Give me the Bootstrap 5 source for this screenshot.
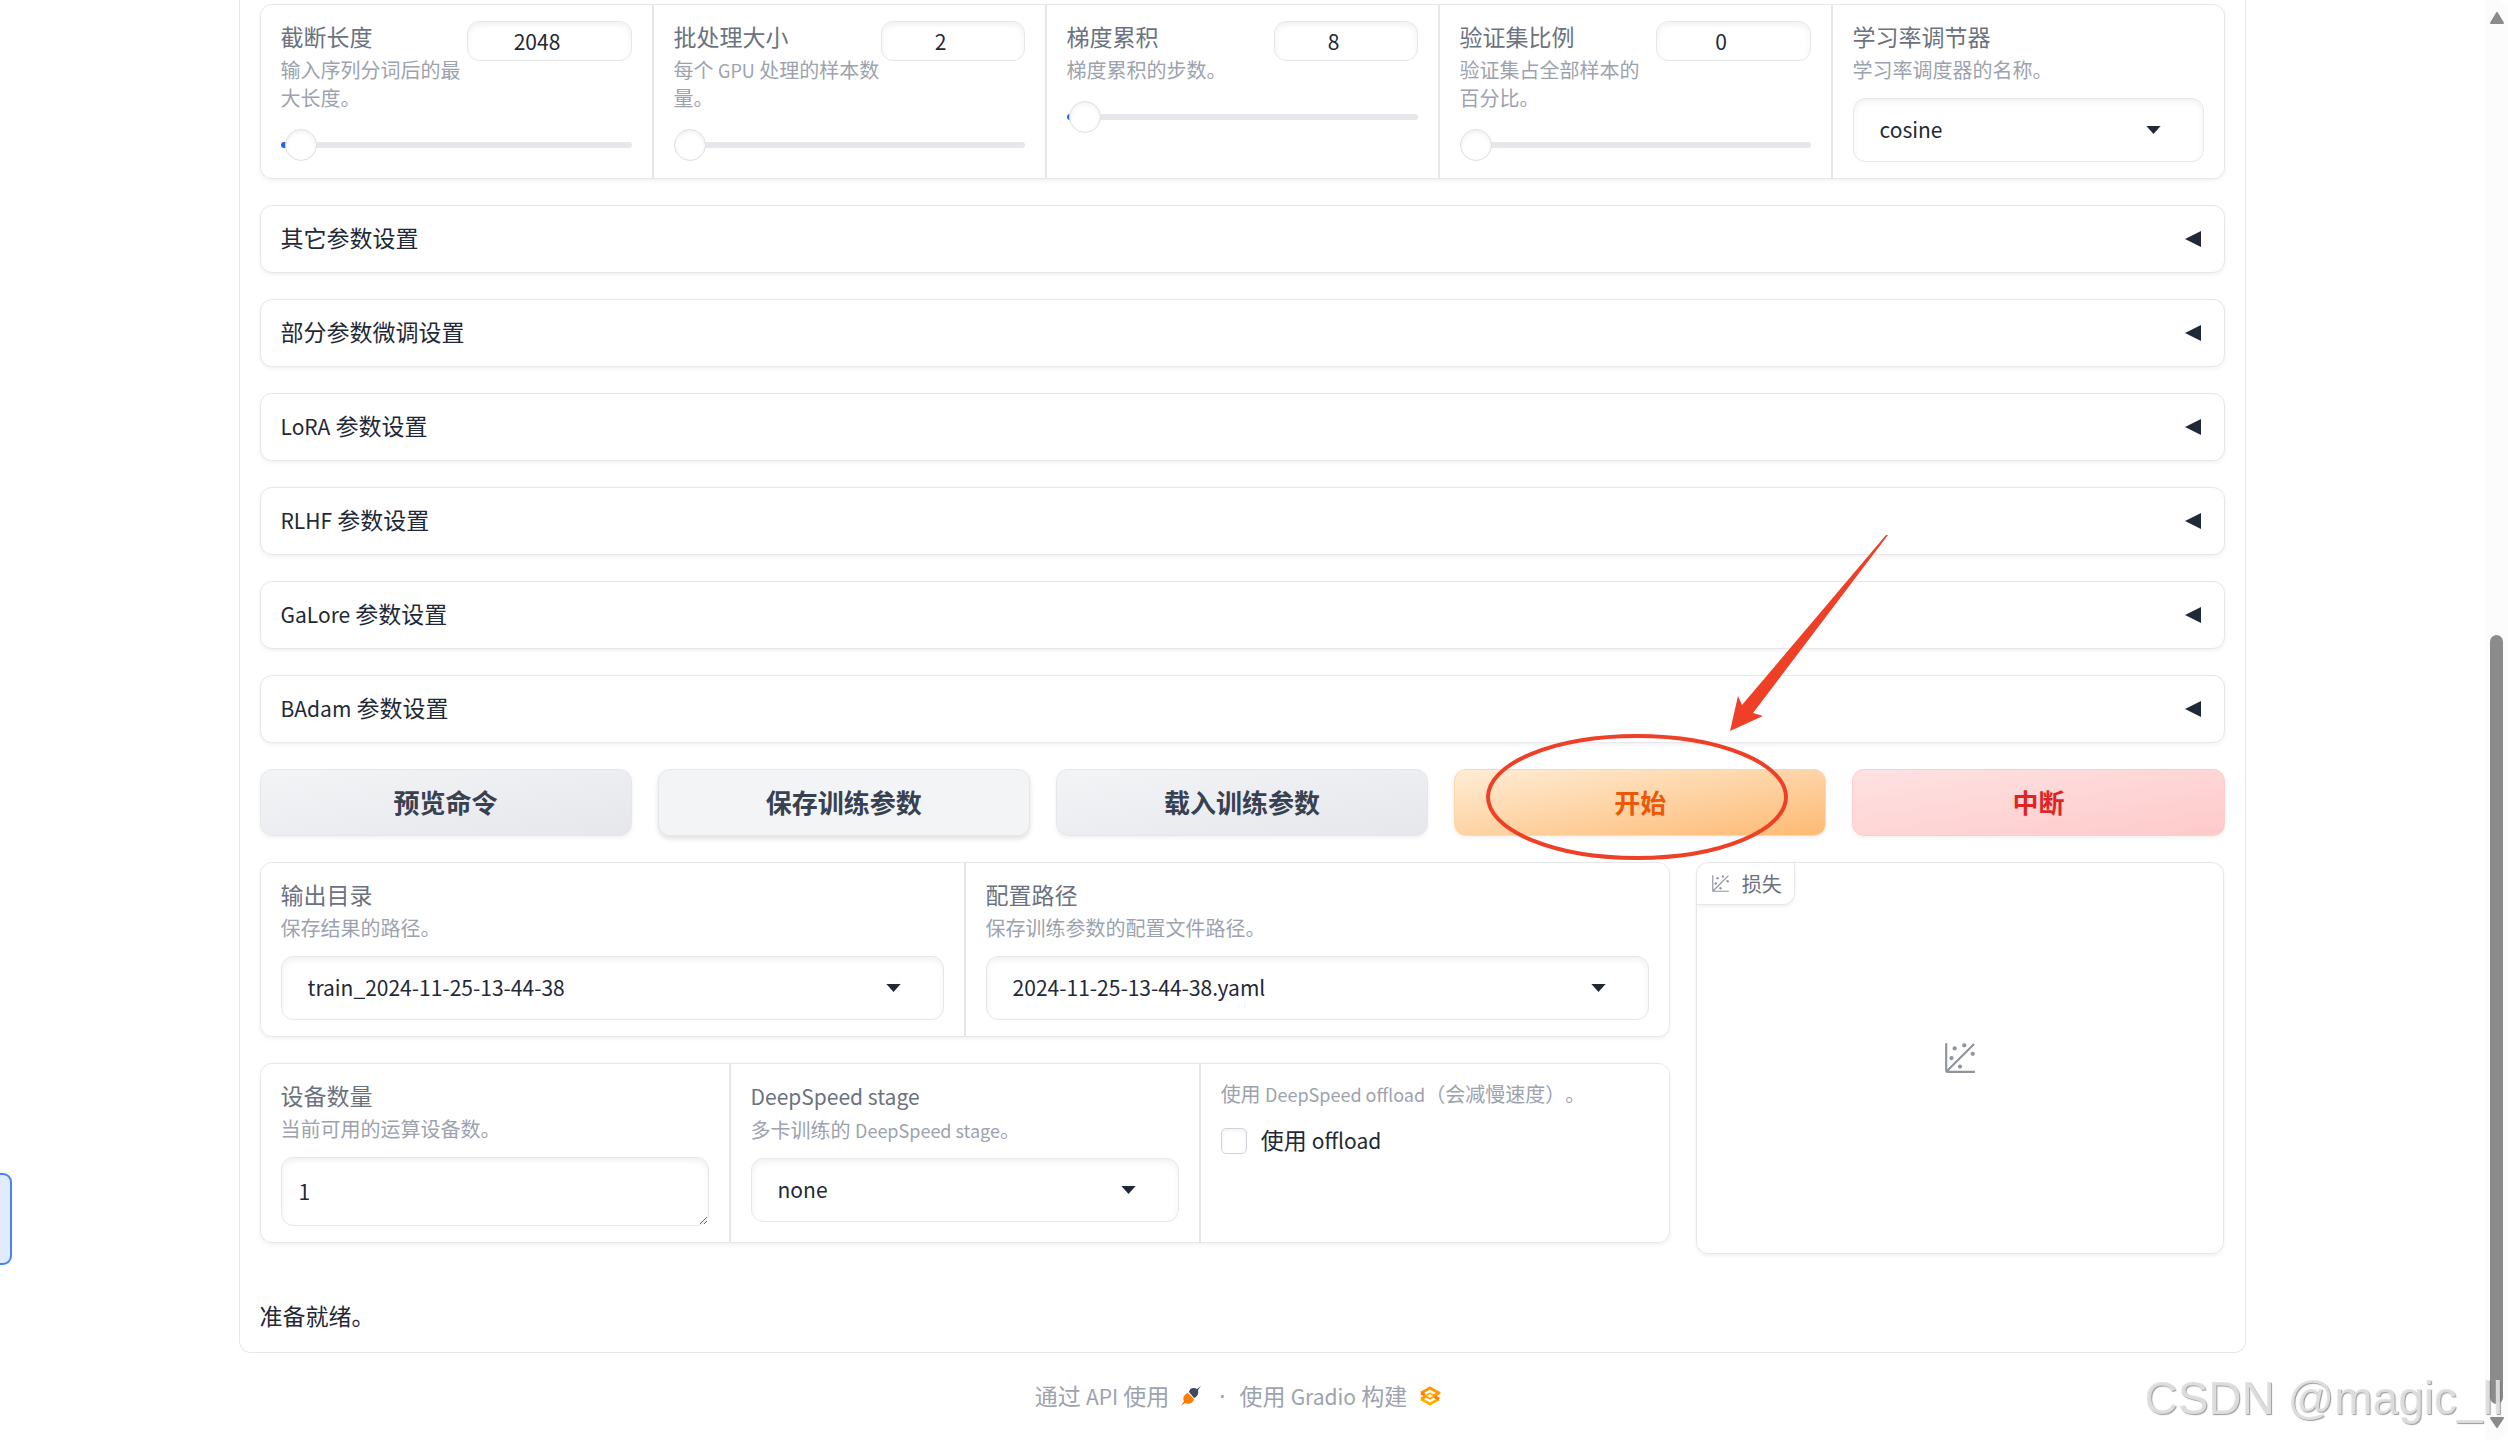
<!DOCTYPE html>
<html lang="zh-CN">
<head>
<meta charset="utf-8">
<meta name="viewport" content="width=device-width, initial-scale=1">
<title>LLaMA Board</title>
<link href="https://cdn.jsdelivr.net/npm/bootstrap@5.3.0/dist/css/bootstrap.min.css" rel="stylesheet">
<style>
  :root { --line: #e5e7eb; --ink: #1f2937; --label: #6b7280; --muted: #9ca3af; --gap: 26px; --round: 12px; }
  body { font-family: "Noto Sans CJK SC", "Noto Sans", sans-serif; font-size: 23px; line-height: 34px; color: var(--ink); background: #fff; min-height: 100vh; overflow: hidden; text-spacing-trim: space-all; }
  .latin { font-size: 21px; }
  .board { max-width: 2007px; border: 1px solid var(--line); border-top: 0; border-radius: 0 0 var(--round) var(--round); padding: 4px 20px 20px; }
  .stack { display: flex; flex-direction: column; gap: var(--gap); }
  .panel { border: 1px solid var(--line); border-radius: var(--round); box-shadow: 0 2px 4px rgba(0,0,0,.06); background: #fff; overflow: hidden; }
  .cells { display: flex; gap: 2px; background: var(--line); }
  .cells > * { flex: 1 1 0; min-width: 0; background: #fff; padding: 16px 20px; }
  .field-label { display: block; color: var(--label); line-height: 30px; margin-bottom: 5px; }
  .hint { display: block; color: var(--muted); font-size: 20px; line-height: 28px; }
  .hint .latin { font-size: 18px; }
  .entry { font-size: 21px; color: var(--ink); border: 1px solid var(--line); border-radius: var(--round); box-shadow: inset 0 3px 6px rgba(0,0,0,.06); background-color: #fff; }
  .num { height: 40px; padding: 0 24px 0 0; text-align: center; flex: none; width: 144px; appearance: textfield; }
  .num::-webkit-inner-spin-button { display: none; }
  .num-wide { width: 165px; }
  .num-mid { width: 155px; }
  select.entry { height: 64px; margin-top: 14px; padding: 0 60px 0 26px;
    background-image: url("data:image/svg+xml,%3Csvg xmlns='http://www.w3.org/2000/svg' viewBox='0 0 16 9'%3E%3Cpath d='M0 0h16L8 9z' fill='%231f2937'/%3E%3C/svg%3E");
    background-size: 15px 8px; background-position: right 42px center; }
  textarea.entry { height: 69px; margin-top: 14px; padding: 16px 17px; line-height: 34px; overflow: hidden; resize: vertical; display: block; }
  .slide { appearance: none; display: block; width: 100%; height: 34px; margin: 16px 0 0; background: transparent; }
  .slide::-webkit-slider-runnable-track { height: 6px; border-radius: 3px; background: linear-gradient(to right, #2563eb var(--fill), var(--line) var(--fill)); }
  .slide::-webkit-slider-thumb { appearance: none; width: 32px; height: 32px; margin-top: -13px; border-radius: 50%; border: 1px solid #dedfe2; background: #fff; box-shadow: inset 0 2px 5px rgba(0,0,0,.06); }
  .fold { width: 100%; height: 68px; padding: 0 23px 0 20px; text-align: left; color: var(--ink); }
  .fold > span { padding-bottom: 4px; }
  .act { flex: 1 1 0; position: relative; }
  .act .btn { width: 100%; height: 67px; font-size: 26px; font-weight: 700; border-radius: var(--round); box-shadow: 0 2px 4px rgba(0,0,0,.06); padding: 0 0 2px; }
  .btn-plain, .btn-plain:hover { color: #374151; border-color: var(--line); background: linear-gradient(to bottom right, #f3f4f6, #e5e7eb); }
  .act .btn-flat { color: #374151; border-color: var(--line); background: #f3f4f6; box-shadow: 0 3px 5px rgba(0,0,0,.12); }
  .btn-go { color: #ea580c; border-color: #fed7aa; background: linear-gradient(to bottom right, #ffedd5, #fdba74); }
  .btn-halt { color: #dc2626; border-color: #fecaca; background: linear-gradient(to bottom right, #fee2e2, #fecaca); }
  .pointer { position: absolute; left: 26px; top: -240px; width: 415px; height: 335px; z-index: 5; pointer-events: none; }
  .results { display: grid; grid-template-columns: minmax(0, 8fr) minmax(0, 3fr); gap: var(--gap); align-items: start; }
  .plot { min-height: 392px; position: relative; color: #8f949e; }
  .plot-tag { position: absolute; left: 0; top: 0; height: 42px; padding: 0 12px 0 14px; border: solid var(--line); border-width: 0 1px 1px 0; border-radius: 0 0 var(--round) 0; box-shadow: 0 2px 4px rgba(0,0,0,.06); font-size: 20px; color: var(--label); gap: 12px; }
  .plot-tag svg { color: #8f949e; }
  .offload { margin-top: 14px; gap: 14px; }
  .offload label { padding-bottom: 2px; }
  .box { width: 26px; height: 26px; margin: 0; border: 1px solid #d1d5db; border-radius: 5px !important; box-shadow: inset 0 2px 4px rgba(0,0,0,.06); }
  .status { padding-top: 18px; }
  .foot { color: var(--muted); padding: 25px 8px 0 0; }
  .foot a { color: inherit; text-decoration: none; gap: 12px; }
  .foot .sep { font-family: "Noto Sans", sans-serif; padding: 0 14px 0 18px; }
  .side-tab { position: fixed; left: -12px; top: 1173px; width: 24px; height: 92px; background: #e1ebfd; border: 2px solid #4285f4; border-radius: 9px; }
  .scroller { position: fixed; right: 0; top: 0; bottom: 0; width: 23px; background: #fcfcfc; padding: 12px 5px; border-radius: 0 var(--round) var(--round) 0; }
  .scroller svg { display: block; flex: none; }
  .scroller .grip { width: 13px; height: 769px; border-radius: 7px; background: #8b8b8b; margin: auto 0 13px; }
  .watermark { position: fixed; right: 5px; bottom: 2px; font-family: "Liberation Sans", sans-serif; font-size: 46px; line-height: 80px; color: rgba(226,226,226,.92); text-shadow: 1px 1px 1px rgba(110,110,110,.7); white-space: nowrap; z-index: 9; }
</style>
<script src="https://cdn.jsdelivr.net/npm/bootstrap@5.3.0/dist/js/bootstrap.bundle.min.js"></script>
</head>
<body>
<svg class="d-none" aria-hidden="true">
  <symbol id="plot-icon" viewBox="0 0 32 32"><g fill="currentColor"><circle cx="20" cy="4" r="2"/><circle cx="8" cy="16" r="2"/><circle cx="28" cy="12" r="2"/><circle cx="11" cy="7" r="2"/><circle cx="16" cy="24" r="2"/><path d="M30 3.413 28.586 2 4 26.585V2H2v26a2 2 0 0 0 2 2h26v-2H5.413Z"/></g></symbol>
  <symbol id="fold-icon" viewBox="0 0 16 16"><path d="M16 0v16L0 8z" fill="currentColor"/></symbol>
</svg>

<div class="pe-4">
<main class="board mx-auto">
  <div class="stack">
    <section class="panel">
      <div class="cells">
        <div>
          <div class="d-flex justify-content-between">
            <div><label class="field-label" for="cutoff">截断长度</label><span class="hint">输入序列分词后的最大长度。</span></div>
            <input class="entry num num-wide" type="number" value="2048" aria-label="截断长度">
          </div>
          <input class="slide" id="cutoff" type="range" min="0" max="131072" value="2048" style="--fill:2%">
        </div>
        <div>
          <div class="d-flex justify-content-between">
            <div><label class="field-label" for="batch">批处理大小</label><span class="hint">每个 <span class="latin">GPU</span> 处理的样本数量。</span></div>
            <input class="entry num" type="number" value="2" aria-label="批处理大小">
          </div>
          <input class="slide" id="batch" type="range" min="1" max="1024" value="2" style="--fill:0%">
        </div>
        <div>
          <div class="d-flex justify-content-between">
            <div><label class="field-label" for="accum">梯度累积</label><span class="hint">梯度累积的步数。</span></div>
            <input class="entry num" type="number" value="8" aria-label="梯度累积">
          </div>
          <input class="slide" id="accum" type="range" min="1" max="1024" value="8" style="--fill:1%">
        </div>
        <div>
          <div class="d-flex justify-content-between">
            <div><label class="field-label" for="valsize">验证集比例</label><span class="hint">验证集占全部样本的百分比。</span></div>
            <input class="entry num num-mid" type="number" value="0" aria-label="验证集比例">
          </div>
          <input class="slide" id="valsize" type="range" min="0" max="1" step="0.001" value="0" style="--fill:0%">
        </div>
        <div>
          <label class="field-label" for="sched">学习率调节器</label><span class="hint">学习率调度器的名称。</span>
          <select class="form-select entry" id="sched"><option>cosine</option></select>
        </div>
      </div>
    </section>

    <button type="button" class="panel fold d-flex align-items-center justify-content-between"><span>其它参数设置</span><svg width="16" height="16"><use href="#fold-icon"/></svg></button>
    <button type="button" class="panel fold d-flex align-items-center justify-content-between"><span>部分参数微调设置</span><svg width="16" height="16"><use href="#fold-icon"/></svg></button>
    <button type="button" class="panel fold d-flex align-items-center justify-content-between"><span><span class="latin">LoRA</span> 参数设置</span><svg width="16" height="16"><use href="#fold-icon"/></svg></button>
    <button type="button" class="panel fold d-flex align-items-center justify-content-between"><span><span class="latin">RLHF</span> 参数设置</span><svg width="16" height="16"><use href="#fold-icon"/></svg></button>
    <button type="button" class="panel fold d-flex align-items-center justify-content-between"><span><span class="latin">GaLore</span> 参数设置</span><svg width="16" height="16"><use href="#fold-icon"/></svg></button>
    <button type="button" class="panel fold d-flex align-items-center justify-content-between"><span><span class="latin">BAdam</span> 参数设置</span><svg width="16" height="16"><use href="#fold-icon"/></svg></button>

    <div class="d-flex" style="gap:var(--gap)">
      <div class="act"><button type="button" class="btn btn-plain">预览命令</button></div>
      <div class="act"><button type="button" class="btn btn-flat">保存训练参数</button></div>
      <div class="act"><button type="button" class="btn btn-plain">载入训练参数</button></div>
      <div class="act">
        <button type="button" class="btn btn-go">开始</button>
        <svg class="pointer" viewBox="0 0 415 335" aria-hidden="true">
          <ellipse cx="157" cy="268" rx="149" ry="61" fill="none" stroke="#ee4026" stroke-width="4"/>
          <path d="M250 202 258 167 262 176 406 6 408 6 273 184 283 187z" fill="#ee4026"/>
        </svg>
      </div>
      <div class="act"><button type="button" class="btn btn-halt">中断</button></div>
    </div>

    <div class="results">
      <div class="stack">
        <section class="panel">
          <div class="cells">
            <div>
              <label class="field-label" for="outdir">输出目录</label><span class="hint">保存结果的路径。</span>
              <select class="form-select entry" id="outdir"><option>train_2024-11-25-13-44-38</option></select>
            </div>
            <div>
              <label class="field-label" for="cfg">配置路径</label><span class="hint">保存训练参数的配置文件路径。</span>
              <select class="form-select entry" id="cfg"><option>2024-11-25-13-44-38.yaml</option></select>
            </div>
          </div>
        </section>
        <section class="panel">
          <div class="cells">
            <div>
              <label class="field-label" for="devices">设备数量</label><span class="hint">当前可用的运算设备数。</span>
              <textarea class="entry w-100" id="devices" rows="1">1</textarea>
            </div>
            <div>
              <label class="field-label" for="stage"><span class="latin">DeepSpeed stage</span></label><span class="hint">多卡训练的 <span class="latin">DeepSpeed stage</span>。</span>
              <select class="form-select entry" id="stage"><option>none</option></select>
            </div>
            <div>
              <span class="hint">使用 <span class="latin">DeepSpeed offload</span>（会减慢速度）。</span>
              <div class="offload d-flex align-items-center">
                <input class="form-check-input box" type="checkbox" id="offload">
                <label for="offload">使用 <span class="latin">offload</span></label>
              </div>
            </div>
          </div>
        </section>
      </div>
      <section class="panel plot d-flex align-items-center justify-content-center">
        <div class="plot-tag d-flex align-items-center"><svg width="19" height="19"><use href="#plot-icon"/></svg><span>损失</span></div>
        <svg width="34" height="34"><use href="#plot-icon"/></svg>
      </section>
    </div>

    <p class="status mb-0">准备就绪。</p>
  </div>
</main>

<footer class="foot d-flex justify-content-center align-items-center">
  <a href="#" class="d-flex align-items-center"><span>通过 <span class="latin">API</span> 使用</span>
    <svg width="20" height="20" viewBox="0 0 20 20"><path d="M0 20 3 15C1 11 4 8 7 7l6 6c-1 4-5 6-9 4z" fill="#ff7c00"/><path d="m20 0-3 4c1 4-1 7-4 8L8 6c1-4 4-5 8-3z" fill="#3f4a5f"/></svg></a>
  <span class="sep">·</span>
  <a href="#" class="d-flex align-items-center"><span>使用 <span class="latin">Gradio</span> 构建</span>
    <svg width="22" height="20" viewBox="0 0 22 20"><g fill="none" stroke-width="3" stroke-linejoin="round"><path d="M2 7 11 2l9 5-9 5-4-2" stroke="#ff9800"/><path d="m2 13 9 5 9-5" stroke="#ffb300"/><path d="m2 13 9-5 9 5" stroke="#ffa000"/><path d="m2 7 4 2m10 2 4 2" stroke="#ff7c00"/></g><path d="m11 8 3 2-3 2-3-2z" fill="#fff3c4"/></svg></a>
</footer>
</div>

<div class="side-tab"></div>
<div class="scroller d-flex flex-column" aria-hidden="true">
  <svg width="14" height="12" viewBox="0 0 14 12"><path d="M7 1 13 11H1z" fill="#8b8b8b" stroke="#8b8b8b" stroke-width="2" stroke-linejoin="round"/></svg>
  <div class="grip"></div>
  <svg width="14" height="11" viewBox="0 0 14 11"><path d="M1 1h12L7 10z" fill="#8b8b8b" stroke="#8b8b8b" stroke-width="2" stroke-linejoin="round"/></svg>
</div>
<div class="watermark">CSDN @magic_ll</div>
</body>
</html>
